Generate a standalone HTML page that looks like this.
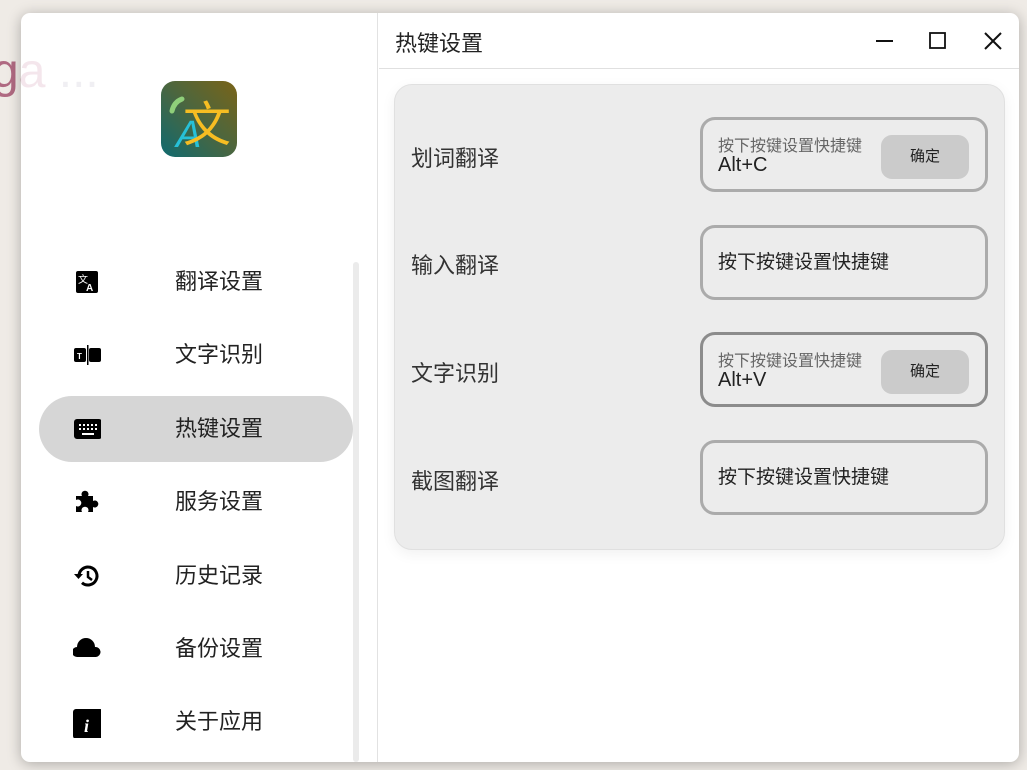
<!DOCTYPE html>
<html><head><meta charset="utf-8"><style>
*{margin:0;padding:0;box-sizing:border-box}
body{width:1027px;height:770px;background:#efebe6;position:relative;overflow:hidden;font-family:"Liberation Sans","Noto Sans CJK SC",sans-serif}
.bg{position:absolute;left:-8px;top:44px;font-size:48px;color:#b06a82;font-family:"Liberation Sans",sans-serif}
.win{position:absolute;left:21px;top:13px;width:998px;height:749px;background:#fff;border-radius:9px;box-shadow:0 2px 14px rgba(0,0,0,.28);overflow:hidden}
.bg2{position:absolute;left:-29px;top:31px;font-size:48px;color:#f4e6ec;font-family:"Liberation Sans",sans-serif}
.side{position:absolute;left:0;top:0;width:357px;height:749px;border-right:1px solid #e2e2e2}
.logo{position:absolute;left:140px;top:68px;width:76px;height:76px;border-radius:14px;background:linear-gradient(225deg,#7a6418 0%,#4a6640 50%,#0f6a70 100%);overflow:hidden}
.item{position:absolute;left:18px;width:314px;height:66px;border-radius:33px}
.item.act{background:#d6d6d6}
.item .ic{position:absolute;left:34px;top:20px;width:28px;height:26px}
.item .t{position:absolute;left:136px;top:0;line-height:66px;font-size:22px;color:#222}
.scroll{position:absolute;left:332px;top:249px;width:6px;height:500px;background:#ebebeb;border-radius:3px}
.title{position:absolute;left:374px;top:13px;font-size:22px;color:#222}
.tbar{position:absolute;left:358px;top:55px;right:0;height:1px;background:#e0e0e0}
.card{position:absolute;left:373px;top:71px;width:611px;height:466px;background:#ececec;border:1px solid #e0e0e0;border-radius:18px;box-shadow:0 4px 14px rgba(0,0,0,.06)}
.lbl{position:absolute;left:16px;font-size:22px;color:#333;width:120px}
.box{position:absolute;left:305px;width:288px;height:75px;border:3px solid #ababab;border-radius:15px}
.box.dark{border-color:#8c8c8c}
.box .ph{position:absolute;left:15px;top:0;line-height:69px;font-size:19px;color:#222}
.box .sm{position:absolute;left:15px;top:12px;font-size:16px;color:#666}
.box .k{position:absolute;left:15px;top:34px;font-size:20px;color:#222}
.box .btn{position:absolute;left:178px;top:15px;width:88px;height:44px;background:#cbcbcb;border-radius:11px;font-size:15px;line-height:44px;text-align:center;color:#222}
</style></head><body>
<div class="bg">ga</div>
<div class="win">
 <div class="bg2">ga <span style="color:#f0eff3">...</span></div>
 <div class="side">
  <div class="logo"><svg width="76" height="76" viewBox="0 0 76 76">
   <path d="M11 30 Q13 21 21 18" stroke="#8fcf7a" stroke-width="5" fill="none" stroke-linecap="round"/>
   <text x="15" y="66" font-size="38" fill="#27c0d8" font-family="Liberation Sans" font-style="italic">A</text>
   <text x="22" y="60" font-size="48" fill="#f7bd22" font-family="Noto Sans CJK SC">文</text>
  </svg></div>
  <div class="item" style="top:236px"><svg class="ic" viewBox="0 0 28 26"><rect x="3" y="2" width="22" height="22" rx="2"/><text x="5" y="14" font-size="10" fill="#fff" font-family="Noto Sans CJK SC">文</text><text x="13" y="22" font-size="10" fill="#fff" font-weight="bold" font-family="Liberation Sans">A</text></svg><div class="t">翻译设置</div></div>
  <div class="item" style="top:309px"><svg class="ic" viewBox="0 0 28 26"><rect x="1" y="6" width="12" height="14" rx="2"/><rect x="16" y="6" width="12" height="14" rx="2"/><rect x="14" y="3" width="1.5" height="20"/><text x="4" y="17" font-size="8" fill="#fff" font-weight="bold" font-family="Liberation Sans">T</text></svg><div class="t">文字识别</div></div>
  <div class="item act" style="top:383px"><svg class="ic" viewBox="0 0 28 26"><rect x="1" y="3" width="28" height="20" rx="3"/><g fill="#fff"><rect x="6" y="8" width="2" height="2"/><rect x="10" y="8" width="2" height="2"/><rect x="14" y="8" width="2" height="2"/><rect x="18" y="8" width="2" height="2"/><rect x="22" y="8" width="2" height="2"/><rect x="6" y="12" width="2" height="2"/><rect x="10" y="12" width="2" height="2"/><rect x="14" y="12" width="2" height="2"/><rect x="18" y="12" width="2" height="2"/><rect x="22" y="12" width="2" height="2"/><rect x="9" y="17" width="12" height="2"/></g></svg><div class="t">热键设置</div></div>
  <div class="item" style="top:456px"><svg class="ic" viewBox="0 0 28 26"><path d="M3 9h6a3.5 3.5 0 1 1 6 0h5v5a3.5 3.5 0 1 1 0 6v5h-5a3.5 3.5 0 1 0-6 0H3v-6a3.5 3.5 0 1 0 0-6z" transform="translate(0,-2)"/></svg><div class="t">服务设置</div></div>
  <div class="item" style="top:530px"><svg class="ic" viewBox="0 0 28 26"><path d="M6 13a9 9 0 1 1 3 6.7" stroke="#000" stroke-width="3" fill="none"/><path d="M1 11h9l-4.5 5z"/><path d="M15 8v6l4 3" stroke="#000" stroke-width="2.5" fill="none"/></svg><div class="t">历史记录</div></div>
  <div class="item" style="top:603px"><svg class="ic" viewBox="0 0 28 26"><path d="M4 21a5 5 0 0 1 0-10 9 9 0 0 1 18 0 5 5 0 0 1 1 10z"/></svg><div class="t">备份设置</div></div>
  <div class="item" style="top:676px"><svg class="ic" viewBox="0 0 28 26" style="top:17px;height:32px"><rect x="0" y="0" width="30" height="30" rx="3"/><text x="11" y="23" font-size="18" fill="#fff" font-style="italic" font-weight="bold" font-family="Liberation Serif">i</text></svg><div class="t">关于应用</div></div>
  <div class="scroll"></div>
 </div>
 <div class="title">热键设置</div>
 <svg style="position:absolute;left:850px;top:16px" width="140" height="24" viewBox="0 0 140 24">
  <path d="M5 12h17" stroke="#111" stroke-width="2"/>
  <rect x="59" y="4" width="15" height="15" stroke="#111" stroke-width="1.8" fill="none"/>
  <path d="M114 4l16 16M130 4l-16 16" stroke="#111" stroke-width="2"/>
 </svg>
 <div class="tbar"></div>
 <div class="card">
  <div class="lbl" style="top:56px">划词翻译</div>
  <div class="box" style="top:32px"><div class="sm">按下按键设置快捷键</div><div class="k">Alt+C</div><div class="btn">确定</div></div>
  <div class="lbl" style="top:163px">输入翻译</div>
  <div class="box" style="top:140px"><div class="ph">按下按键设置快捷键</div></div>
  <div class="lbl" style="top:271px">文字识别</div>
  <div class="box dark" style="top:247px"><div class="sm">按下按键设置快捷键</div><div class="k">Alt+V</div><div class="btn">确定</div></div>
  <div class="lbl" style="top:379px">截图翻译</div>
  <div class="box" style="top:355px"><div class="ph">按下按键设置快捷键</div></div>
 </div>
</div>
</body></html>
